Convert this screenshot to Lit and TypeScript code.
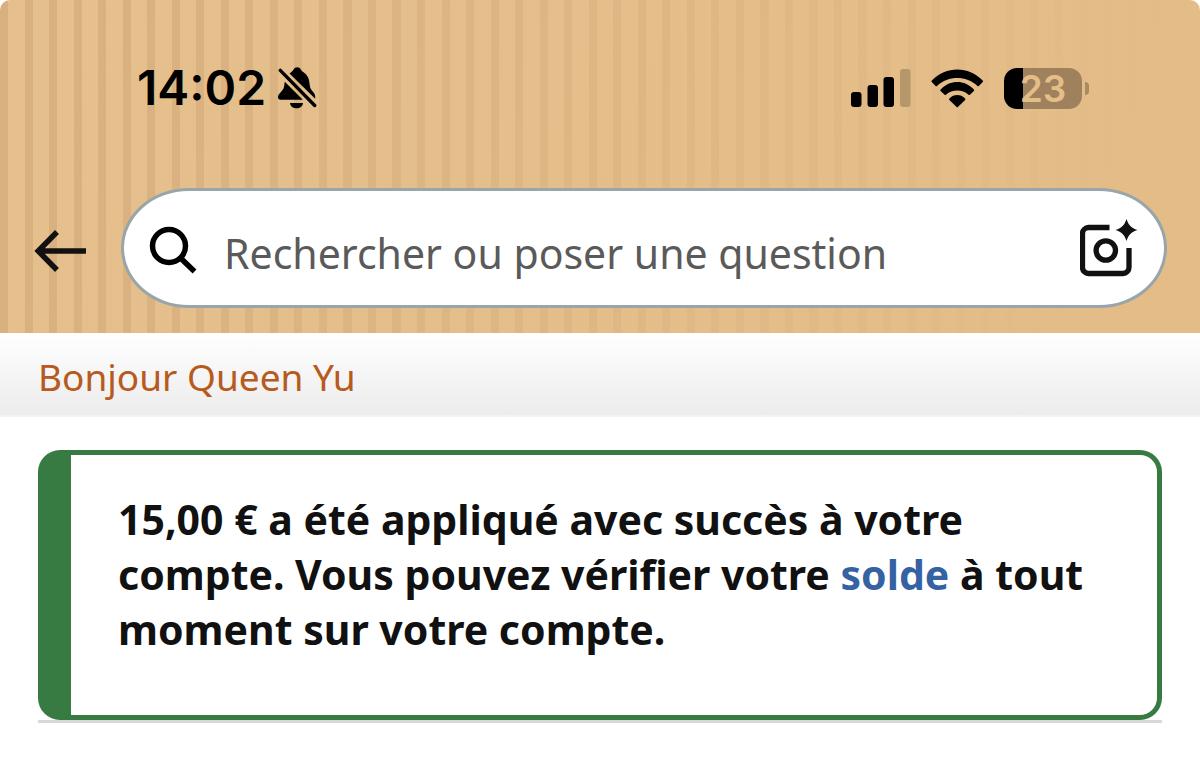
import { LitElement, html, css } from "lit";
import { customElement } from "lit/decorators.js";

@customElement("status-bar")
class StatusBar extends LitElement {
  static styles = css`
    :host {
      display: flex;
      justify-content: space-between;
      align-items: center;
      padding: 60px 111px 0 137px;
      color: #000;
      font-family: Inter, "Liberation Sans", sans-serif;
    }
    .group {
      display: flex;
      align-items: center;
      height: 56px;
    }
    .left { gap: 12px; }
    .right { gap: 20px; }
    .time {
      font-size: 48px;
      line-height: 58px;
      font-weight: 600;
    }
    svg { display: block; }
    .battery { display: flex; align-items: center; gap: 3px; }
    .cell {
      display: flex;
      justify-content: center;
      align-items: center;
      box-sizing: border-box;
      width: 78px;
      height: 41px;
      border-radius: 13px;
      background: linear-gradient(to right, #000 24%, #9f815d 24%);
      color: #e4be88;
      font-size: 37px;
      line-height: 41px;
      font-weight: 600;
    }
    .tip {
      width: 4px;
      height: 13px;
      border-radius: 0 4px 4px 0;
      background: #a98a62;
    }
  `;
  render() {
    return html`
      <div class="group left">
        <span class="time">14:02</span>
        <svg width="39" height="42" viewBox="0 0 39 42" aria-label="Silencieux">
          <path d="M11.500 6.500C13.500 5 14.800 4.200 15.600 2.600C17 -.4 21.400 -.4 22.800 2.600C23.600 4.200 25 4.800 26.800 6.200C30.800 9.600 31.300 13.500 31.800 18.500C32.400 24 37.200 25.500 37.200 29V31.700Z" />
          <path d="M6.800 14.800L24.800 32.800H2.600C.8 32.800 0 31.900 0 30.300C0 26.200 5.200 24.500 6.100 19.500C6.500 17.500 6.500 16 6.800 14.800Z" />
          <path d="M12 36H25C24.600 43 12.400 43 12 36Z" />
          <path d="M2.300 3.400L36.700 38.500" fill="none" stroke="#000" stroke-width="3.400" stroke-linecap="round" />
        </svg>
      </div>
      <div class="group right">
        <svg width="60" height="38" viewBox="0 0 60 38" aria-label="Réseau">
          <rect x="0" y="23" width="10.500" height="15" rx="3" />
          <rect x="16.500" y="16" width="10.500" height="22" rx="3" />
          <rect x="32.500" y="8" width="10.500" height="30" rx="3" />
          <rect x="49" y="0" width="10.500" height="38" rx="3" fill="#b6966b" />
        </svg>
        <svg width="53" height="39" viewBox="0 0 53 39" aria-label="Wi-Fi">
          <path d="M.8 11.500Q0 12.300 .8 13.100L4.600 16.900Q5.300 17.500 6 16.900C17.500 6.300 35 6.300 46.500 16.900Q47.200 17.500 47.900 16.900L51.700 13.100Q52.500 12.300 51.700 11.500C37.500-3.200 15-3.200 .8 11.500Z" />
          <path d="M9.600 20.500Q8.900 21.200 9.600 21.900L13.600 25.700Q14.300 26.300 15 25.700C21.300 20.100 31.200 20.100 37.500 25.700Q38.200 26.300 38.900 25.700L42.900 21.900Q43.600 21.200 42.900 20.500C33.500 10.600 19 10.600 9.600 20.500Z" />
          <path d="M18.400 29.500Q17.700 30.200 18.400 30.900L25.600 38Q26.250 38.600 26.900 38L34.100 30.900Q34.800 30.200 34.100 29.500C29.800 24.900 22.700 24.900 18.400 29.500Z" />
        </svg>
        <div class="battery"><span class="cell">23</span><span class="tip"></span></div>
      </div>
    `;
  }
}

@customElement("search-header")
class SearchHeader extends LitElement {
  static styles = css`
    :host {
      display: flex;
      align-items: center;
      gap: 34px;
      padding: 72px 33px 25px 34px;
    }
    svg { display: block; }
    .icon {
      padding: 0;
      border: 0;
      background: none;
      flex: none;
      cursor: pointer;
    }
    .back { padding-top: 6px; }
    .box {
      flex: 1;
      min-width: 0;
      display: flex;
      align-items: center;
      box-sizing: border-box;
      height: 120px;
      padding: 0 26px 0 25px;
      border: 3px solid #98a5aa;
      border-radius: 68px / 60px;
      background: #fff;
    }
    .glass { padding-top: 4px; }
    .query {
      flex: 1;
      min-width: 0;
      height: 64px;
      margin: 10px 24px 0 26px;
      padding: 0;
      border: 0;
      outline: 0;
      background: none;
      color: #111;
      font-family: "Noto Sans", sans-serif;
      font-size: 41px;
    }
    .query::placeholder { color: #5a5a5a; opacity: 1; }
  `;
  render() {
    return html`
      <button class="icon back" aria-label="Retour">
        <svg width="53" height="44" viewBox="0 0 53 44">
          <path d="M52 22H4M23 3L4.200 22L23 41" fill="none" stroke="#111" stroke-width="5.500" />
        </svg>
      </button>
      <div class="box">
        <svg class="glass" width="49" height="49" viewBox="0 0 49 49">
          <circle cx="20" cy="20" r="16.500" fill="none" stroke="#000" stroke-width="5.500" />
          <path d="M31.500 32L45.500 45.500" stroke="#000" stroke-width="5.500" />
        </svg>
        <input class="query" type="search" aria-label="Rechercher" placeholder="Rechercher ou poser une question" />
        <button class="icon" aria-label="Rechercher par image">
          <svg width="58" height="58" viewBox="0 0 58 58">
            <path d="M29.500 8.500H8.500A6 6 0 0 0 2.500 14.500V48.500A6 6 0 0 0 8.500 54.500H43A6 6 0 0 0 49 48.500V29" fill="none" stroke="#111" stroke-width="5.300" />
            <circle cx="25.800" cy="31.500" r="9.700" fill="none" stroke="#111" stroke-width="5.300" />
            <path d="M46.500 0C48.800 6.500 51 8.700 57.500 11C51 13.300 48.800 15.500 46.500 22C44.200 15.500 42 13.300 35.500 11C42 8.700 44.200 6.500 46.500 0Z" fill="#111" />
          </svg>
        </button>
      </div>
    `;
  }
}

@customElement("app-root")
class AppRoot extends LitElement {
  static styles = css`
    :host {
      display: block;
      background: #fff;
      color: #111;
      font-family: "Noto Sans", sans-serif;
    }
    .top {
      border-radius: 10px 10px 0 0;
      background:
        linear-gradient(112deg, #e4bc8800 8%, #e4bc88 92%),
        repeating-linear-gradient(to right, #d9b180 0 0.68%, #e5c08c 0.68% 2.044%);
    }
    .greeting {
      box-sizing: border-box;
      padding: 19px 38px 13px;
      border-bottom: 2px solid #f4f4f4;
      background: linear-gradient(#fff, #ececec);
      color: #b75a20;
      font-size: 37px;
      line-height: 50px;
    }
    .content { padding: 33px 38px; }
    .notice {
      padding: 37px 44px 58px 47px;
      border: 5px solid #377b43;
      border-left-width: 33px;
      border-radius: 22px;
      background: #fff;
    }
    .message {
      margin: 0;
      font-size: 41px;
      line-height: 55px;
      font-weight: 700;
    }
    .link { color: #3562a3; text-decoration: none; }
    .rule { height: 3px; margin: 0; border: 0; background: #d5d9d9; }
  `;
  render() {
    return html`
      <header class="top">
        <status-bar></status-bar>
        <search-header></search-header>
      </header>
      <div class="greeting">Bonjour Queen Yu</div>
      <main class="content">
        <section class="notice" role="status">
          <p class="message">
            15,00 € a été appliqué avec succès à votre compte. Vous pouvez
            vérifier votre <a class="link" href="#solde">solde</a> à tout moment
            sur votre compte.
          </p>
        </section>
        <hr class="rule" />
      </main>
    `;
  }
}
